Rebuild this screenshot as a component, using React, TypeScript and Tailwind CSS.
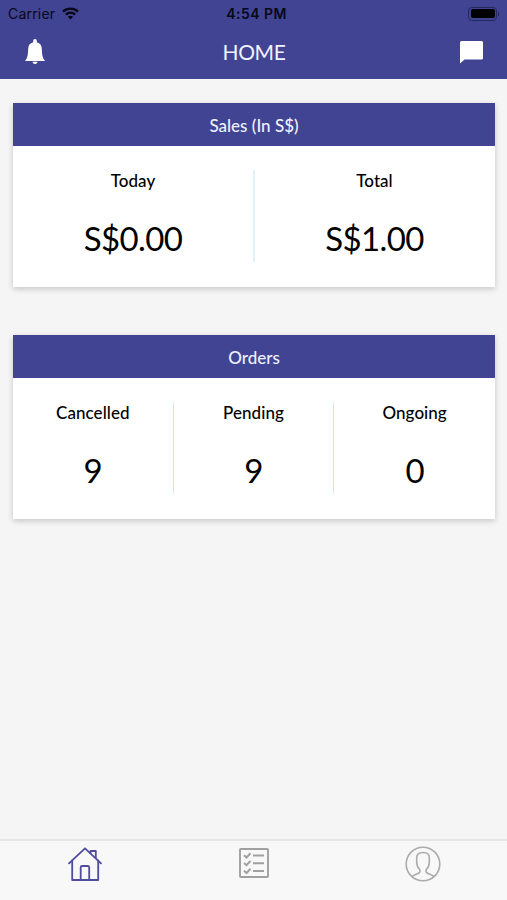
import React from "react";

type Stat = { label: string; value: string };

function StatCard({ title, stats }: { title: string; stats: Stat[] }) {
  return (
    <section className="h-[184px] bg-white shadow-[0_2px_6px_rgba(0,0,0,0.2)]">
      <h2 className="flex h-[43px] items-center justify-center bg-[#404493] pt-[3px] text-[17px] font-medium text-[#eef0ff]">
        {title}
      </h2>
      <div className="grid auto-cols-fr grid-flow-col pt-6">
        {stats.map((s, i) => (
          <div
            key={s.label}
            className={
              "flex h-[92px] flex-col items-center " +
              (i < stats.length - 1
                ? stats.length === 2
                  ? "-mr-px border-r-2 border-[#e0f1fc]"
                  : "border-r border-[#c8eafc]"
                : "")
            }
          >
            <div className="pt-px text-[17px] leading-5 font-medium tracking-[0.05px]">{s.label}</div>
            <div className="mt-[27px] text-[33px] leading-10 tracking-[-0.6px]">{s.value}</div>
          </div>
        ))}
      </div>
    </section>
  );
}

function WifiIcon() {
  return (
    <svg width="17" height="13" viewBox="0 0 17 13" fill="none" stroke="#080818" strokeWidth="2.3">
      <path d="M1 4.7C5.2.7 11.8.7 16 4.7" />
      <path d="M3.8 7.6C6.5 5.1 10.5 5.1 13.2 7.6" />
      <path d="M8.5 12.4 5.9 9.8C7.4 8.5 9.6 8.5 11.1 9.8Z" fill="#080818" stroke="none" />
    </svg>
  );
}

function BellIcon() {
  return (
    <svg width="20" height="26" viewBox="0 0 20 26" fill="#fff">
      <path d="M10 0c1.200 0 1.800.9 1.800 2v1.300c3.400.8 4.900 3.200 5 6.700.1 5.500.7 9.300 3.200 12H0c2.500-2.700 3.100-6.500 3.200-12 .1-3.500 1.600-5.900 5-6.700V2c0-1.100.6-2 1.800-2Z" />
      <path d="M7.500 22.800h5c-.3 1.500-1.200 2.200-2.500 2.200s-2.200-.7-2.500-2.200Z" />
    </svg>
  );
}

function ChatIcon() {
  return (
    <svg width="23" height="23" viewBox="0 0 23 23" fill="#fff">
      <path d="M1.500 0h20Q23 0 23 1.500v15.500q0 1.500-1.500 1.500H4.500L0 22.500V1.500Q0 0 1.500 0Z" />
    </svg>
  );
}

function HomeIcon() {
  return (
    <svg width="34" height="34" viewBox="0 0 34 34" fill="none" stroke="#504b9f" strokeWidth="1.800" strokeLinejoin="round" strokeLinecap="round">
      <path d="M1 16.300 17 1.300l16 15" />
      <path d="M4.200 13.500V33h26V13.500" />
      <path d="M12.700 33V20.500q0-1.500 1.500-1.500h5.500q1.500 0 1.500 1.500V33" />
      <path d="M22.500 6.200V4h5.300v7.200" />
    </svg>
  );
}

function ListIcon() {
  return (
    <svg width="30" height="30" viewBox="0 0 30 30" fill="none" stroke="#a0a0a0" strokeWidth="1.900">
      <rect x="1" y="1" width="28" height="28" rx=".8" />
      <path d="M5 7.200 7.500 9.500 11.500 5.300M5 15 7.500 17.200 11.500 13M5 22.700 7.500 25 11.500 20.800" strokeWidth="2" />
      <path d="M14 7.500h11M14 15.200h11M14 23h11" strokeWidth="2" />
    </svg>
  );
}

function ProfileIcon() {
  return (
    <svg width="36" height="36" viewBox="0 0 36 36" fill="none" stroke="#ababab" strokeWidth="1.600">
      <circle cx="18" cy="18" r="16.800" />
      <path d="M7 30.600c1.300-1.400 3-1.900 4.700-2.500 3-1 3.900-2.400 3-4.600-2-2-3-4.300-3-7.300v-4.500c0-3.500 2.200-5.200 6.300-5.200s6.300 1.700 6.300 5.200v4.500c0 3-1 5.300-3 7.300-.9 2.200 0 3.600 3 4.600 1.700.6 3.400 1.100 4.700 2.500" />
    </svg>
  );
}

export default function App() {
  return (
    <div className="flex h-[900px] w-full flex-col bg-[#f5f5f5] font-['Lato',sans-serif] text-black">
      <header className="h-[79px] bg-[#404493]">
        <div className="grid h-[27px] grid-cols-3 items-center px-2 font-['Inter',sans-serif] text-[#080818]">
          <div className="flex items-center gap-[7px]">
            <span className="text-[14px] tracking-[0.2px]">Carrier</span>
            <WifiIcon />
          </div>
          <div className="pl-[6px] text-center text-[14px] leading-5 font-semibold tracking-[0.45px]">4:54 PM</div>
          <div className="flex items-center justify-end">
            <div className="h-[14px] w-[29px] rounded-[4px] border border-[#25285b] p-[1.500px]">
              <div className="h-full rounded-[2px] bg-black" />
            </div>
            <div className="ml-px h-1 w-px bg-[#25285b]" />
          </div>
        </div>
        <div className="flex h-[50px] items-center justify-between pr-6 pl-[25px]">
          <BellIcon />
          <h1 className="pl-[3px] text-[21px] tracking-[-0.4px] text-[#f1f2ff]">HOME</h1>
          <ChatIcon />
        </div>
      </header>
      <main className="flex flex-1 flex-col gap-12 pt-6 pr-3 pl-[13px]">
        <StatCard
          title="Sales (In S$)"
          stats={[
            { label: "Today", value: "S$0.00" },
            { label: "Total", value: "S$1.00" },
          ]}
        />
        <StatCard
          title="Orders"
          stats={[
            { label: "Cancelled", value: "9" },
            { label: "Pending", value: "9" },
            { label: "Ongoing", value: "0" },
          ]}
        />
      </main>
      <nav className="grid h-[61px] grid-cols-3 justify-items-center border-t-2 border-[#e6e6e6] bg-[#f8f8f8] pt-[5px]">
        <div className="pt-px pl-px"><HomeIcon /></div>
        <div className="pt-[2px]"><ListIcon /></div>
        <div><ProfileIcon /></div>
      </nav>
    </div>
  );
}
